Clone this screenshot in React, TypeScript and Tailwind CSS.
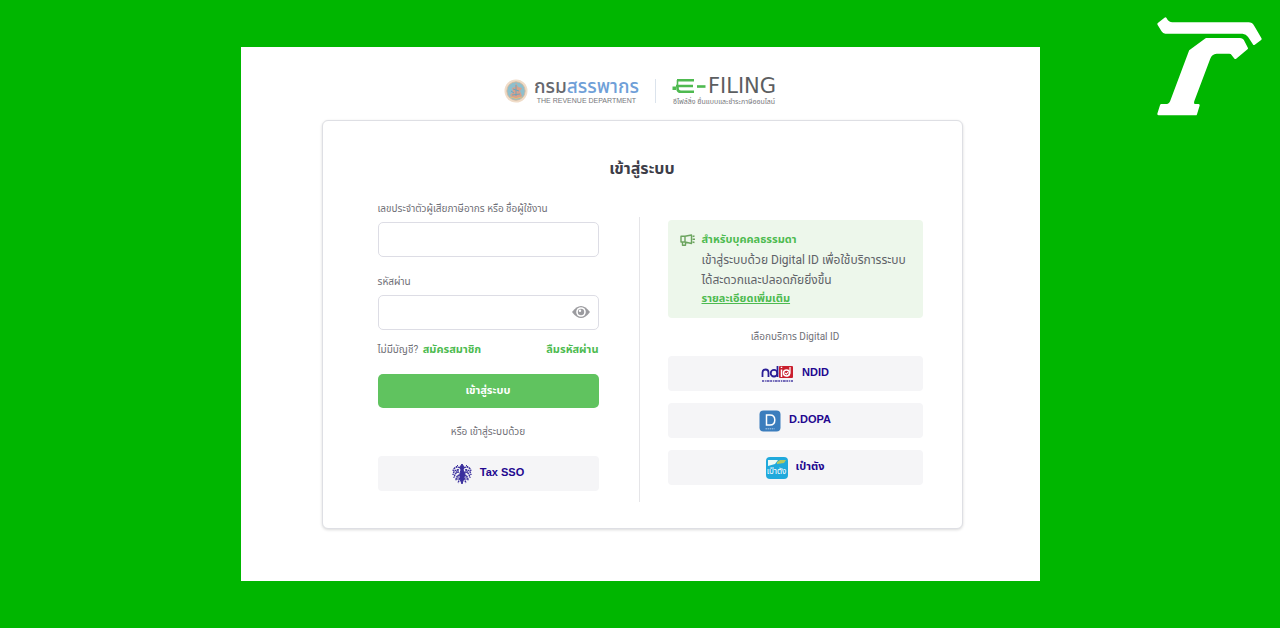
import type { ReactNode } from "react";

function PublisherLogo() {
  return (
    <svg
      viewBox="48 48 321 300"
      className="absolute top-4 right-[17px] w-[107px] h-[100px] text-white"
      fill="currentColor"
      stroke="currentColor"
      strokeWidth="8"
      strokeLinejoin="round"
      aria-hidden="true"
    >
      <path d="M56 72 L76 56 Q84 71 97 71 H326 Q334 71 339 79 L361 117 L342 131 Q334 118 327 108 Q321 98 308 97 H76 Q71 97 68 92 Z" />
      <path d="M199 118 H300 Q305 118 308 122 L320 145 L286 173 L276 160 Q273 157 268 157 H230 Q212 158 207 175 L159 302 Q156 315 164 316 H175 L167 342 H56 L64 316 H82 Q90 315 94 305 L151 153 Z" />
    </svg>
  );
}

function Seal() {
  return (
    <svg viewBox="0 0 24 24" className="size-6 shrink-0" aria-hidden="true">
      <circle cx="12" cy="12" r="11.5" fill="#f0dcc8" />
      <circle cx="12" cy="12" r="9.2" fill="#8ebfcd" stroke="#d9b596" strokeWidth="0.8" />
      <path d="M12 4 L14 8 L18 9 L16 12 L18 17 L14 19 H9 L6 16 L9 13 L8 9 L11 8 Z" fill="#d9a08b" />
      <path d="M12 6 V17 M9 10 L15 12 M8 16 L16 15 M7 12 L10 14" stroke="#6fa5bb" strokeWidth="1" />
      <path d="M6 18 Q12 21 18 18" stroke="#e8bd77" strokeWidth="1" fill="none" />
    </svg>
  );
}

function EFilingMark() {
  return (
    <svg viewBox="0 0 34 16" className="w-[34px] h-4 shrink-0" fill="none" aria-hidden="true">
      <path d="M5 2.2 H22 M4 8 H21 M22 13.8 H9 Q5.5 13.8 5.5 10.5 V8" stroke="#4fba50" strokeWidth="2.6" />
      <path d="M5.5 2 V8" stroke="#4fba50" strokeWidth="1.6" />
      <path d="M0.5 8.5 H4 V12 H0.5 Z" fill="#4fba50" />
      <path d="M25 8.5 H33.5" stroke="#4fba50" strokeWidth="2.6" />
    </svg>
  );
}

function EyeIcon() {
  return (
    <svg viewBox="0 0 20 14" className="w-5 h-3.5" aria-hidden="true">
      <path d="M1 7 Q10 -5 19 7 Q10 19 1 7 Z" fill="#9b9b9f" />
      <circle cx="10" cy="7" r="4.8" fill="white" />
      <circle cx="10" cy="7" r="3.2" fill="#9b9b9f" />
      <circle cx="9" cy="5.8" r="1.2" fill="white" />
    </svg>
  );
}

function MegaphoneIcon() {
  return (
    <svg viewBox="0 0 16 14" className="w-4 h-3.5 mt-[3px] shrink-0" fill="none" stroke="#6ba45e" strokeWidth="1.4" strokeLinejoin="round" aria-hidden="true">
      <path d="M1 3.2 H5 L11.5 2 V10.5 L5 9 H1 Z M5 3.2 V9 M2.5 9 V12.3 H5.5 V9.5" />
      <path d="M12.5 3.5 L14.5 3 M12.5 6.2 H15 M12.5 9 L14.5 9.5" />
    </svg>
  );
}

function GarudaIcon() {
  return (
    <svg viewBox="0 0 20 22" className="w-5 h-[22px]" fill="none" stroke="#3a2f9d" aria-hidden="true">
      <path d="M10 1 L12 4 L11 7 L13 10 L12 15 L10 21 L8 16 L8 10 L9 7 L8 4 Z" fill="#3a2f9d" />
      <path d="M8 5 Q3 2 1 8 M7 7 Q2 6 1 12 M7 9 Q3 9 2 15 M8 12 Q4 12 4 18 M8 15 L6 20" strokeWidth="1.4" strokeDasharray="2 0.6" />
      <path d="M12 5 Q17 2 19 8 M13 7 Q18 6 19 12 M13 9 Q17 9 18 15 M12 12 Q16 12 16 18 M12 15 L14 20" strokeWidth="1.4" strokeDasharray="2 0.6" />
      <path d="M4 4 L6 2 M14 2 L16 4 M6 6 L4 10 M14 6 L16 10 M6 12 L6 17 M14 12 L14 17" />
    </svg>
  );
}

function NdidIcon() {
  return (
    <svg viewBox="0 0 33 18" className="w-[33px] h-[18px]" fill="none" aria-hidden="true">
      <rect x="18" y="1" width="14" height="12" rx="1" fill="#c91f2e" />
      <g stroke="#2b1f96" strokeWidth="1.8">
        <path d="M1.5 12 V7.5 Q1.5 4.5 4.5 4.5 Q7.5 4.5 7.5 7.5 V12" />
        <circle cx="13" cy="8.2" r="3.3" />
        <path d="M16.5 1 V12" />
      </g>
      <g stroke="white" strokeWidth="1.5">
        <path d="M20.5 4.5 V12 M20.5 1.8 V3" />
        <circle cx="25.5" cy="8" r="3" />
        <path d="M29 2 V7 Q29 11 25.5 11 M24 8 L25.5 9 L27 7" strokeWidth="1.2" />
      </g>
      <path d="M1 16 H32" stroke="#4a3fa5" strokeWidth="1.6" strokeDasharray="2 0.8 1 0.7 3 0.6" />
    </svg>
  );
}

function DopaIcon() {
  return (
    <svg viewBox="0 0 22 22" className="size-[22px]" aria-hidden="true">
      <rect x="0.5" y="0.5" width="21" height="21" rx="4" fill="#3b7dbd" />
      <path d="M7.5 5 H11 Q15.8 5 15.8 10 Q15.8 15 11 15 H7.5 Z" fill="none" stroke="white" strokeWidth="1.5" />
      <path d="M6.5 18.8 H15.5" stroke="#a9cbea" strokeDasharray="1.5 0.6" />
    </svg>
  );
}

function PaotangIcon() {
  return (
    <span className="relative flex size-[22px] items-end justify-center overflow-hidden rounded bg-[#20a9dc] text-[8px] leading-[14px] font-normal text-white">
      <svg viewBox="0 0 22 22" className="absolute inset-0" aria-hidden="true">
        <path d="M2 3 H12 L9 7 L2 9 Z" fill="#eef9f5" />
        <path d="M11 5 L14 3 H20 L18 6 L11 7 Z" fill="#b6c861" />
      </svg>
      <span className="relative">เป๋าตัง</span>
    </span>
  );
}

function ServiceButton({ icon, children }: { icon: ReactNode; children: ReactNode }) {
  return (
    <button
      type="button"
      className="flex h-[35px] w-full items-center justify-center gap-2 rounded bg-[#f5f5f7] text-[11px] font-bold text-[#22078f]"
    >
      {icon}
      <span className="pb-0.5">{children}</span>
    </button>
  );
}

export default function App() {
  return (
    <div className="relative min-h-screen bg-[#00b600] py-[47px] font-['Liberation_Sans','Noto_Sans_Thai',sans-serif]">
      <PublisherLogo />
      <main className="mx-auto max-w-[799px] bg-white pt-7 pr-4 pb-[52px] pl-5">
        <header className="flex h-[45px] items-start justify-center pr-1">
          <div className="flex items-center gap-1.5 pt-0.5">
            <Seal />
            <div className="text-center">
              <div className="text-[19px] leading-5 font-medium text-[#66686e]">
                กรม<span className="text-[#6f9fd8]">สรรพากร</span>
              </div>
              <div className="text-[7px] leading-2 text-[#77777c]">THE REVENUE DEPARTMENT</div>
            </div>
          </div>
          <div className="mx-4 mt-1 h-6 border-l border-[#dbe3ec]" />
          <div className="pt-[3px]">
            <div className="flex items-center gap-0.5 font-['DejaVu_Sans',sans-serif] text-[21px] leading-4 text-[#5c5e61]">
              <EFilingMark />
              FILING
            </div>
            <div className="pt-1 text-center text-[7px] leading-2 text-[#77777c]">อีไฟล์ลิ่ง ยื่นแบบและชำระภาษีออนไลน์</div>
          </div>
        </header>

        <section className="mx-auto max-w-[641px] rounded-md border border-[#dedfe4] bg-white pt-9 pb-[26px] shadow-[0_1px_3px_rgba(0,0,0,0.15)]">
          <h1 className="text-center text-base leading-6 font-bold text-[#3d3d48]">เข้าสู่ระบบ</h1>
          <div className="mt-9 grid grid-cols-[221fr_284fr] gap-x-10 pr-[39px] pl-[55px] font-['Roboto','Noto_Sans_Thai',sans-serif]">
            <form className="-mt-4 text-[10px] text-[#707077]">
              <label htmlFor="taxpayer" className="block leading-4">เลขประจำตัวผู้เสียภาษีอากร หรือ ชื่อผู้ใช้งาน</label>
              <input id="taxpayer" className="mt-[5px] block h-[35px] w-full rounded-[5px] border border-[#dddde5] px-3 text-xs" />
              <label htmlFor="password" className="mt-[17px] block leading-4">รหัสผ่าน</label>
              <div className="relative mt-[5px]">
                <input id="password" type="password" className="block h-[35px] w-full rounded-[5px] border border-[#dddde5] px-3 pr-9 text-xs" />
                <button type="button" aria-label="แสดงรหัสผ่าน" className="absolute top-2.5 right-2">
                  <EyeIcon />
                </button>
              </div>
              <div className="mt-3 flex items-center justify-between leading-4">
                <p>
                  ไม่มีบัญชี? <a href="#register" className="ml-0.5 text-[11px] font-bold text-[#4dbb50]">สมัครสมาชิก</a>
                </p>
                <a href="#forgot" className="text-[11px] font-bold text-[#4dbb50]">ลืมรหัสผ่าน</a>
              </div>
              <button type="submit" className="mt-4 h-[34px] w-full rounded-[5px] bg-[#60c35f] text-[11px] font-bold text-white">เข้าสู่ระบบ</button>
              <p className="my-4 text-center leading-4">หรือ เข้าสู่ระบบด้วย</p>
              <div className="font-['Liberation_Sans','Noto_Sans_Thai',sans-serif]">
                <ServiceButton icon={<GarudaIcon />}>Tax SSO</ServiceButton>
              </div>
            </form>

            <div className="border-l border-[#e5e5e8] pt-[3px] pb-[17px] pl-7">
              <div className="flex gap-1.5 rounded bg-[#edf7eb] py-2.5 pr-3 pl-3 text-xs leading-5 text-[#606268]">
                <MegaphoneIcon />
                <div>
                  <h2 className="text-[11px] leading-5 font-bold text-[#4dbb50]">สำหรับบุคคลธรรมดา</h2>
                  <p className="whitespace-nowrap">
                    เข้าสู่ระบบด้วย Digital ID เพื่อใช้บริการระบบ
                    <br />
                    ได้สะดวกและปลอดภัยยิ่งขึ้น
                  </p>
                  <a href="#details" className="block text-[11px] leading-[18px] font-bold text-[#4dbb50] underline">รายละเอียดเพิ่มเติม</a>
                </div>
              </div>
              <p className="my-[11px] text-center text-[10px] leading-4 text-[#707077]">เลือกบริการ Digital ID</p>
              <div className="flex flex-col gap-3 font-['Liberation_Sans','Noto_Sans_Thai',sans-serif]">
                <ServiceButton icon={<NdidIcon />}>NDID</ServiceButton>
                <ServiceButton icon={<DopaIcon />}>D.DOPA</ServiceButton>
                <ServiceButton icon={<PaotangIcon />}>เป๋าตัง</ServiceButton>
              </div>
            </div>
          </div>
        </section>
      </main>
    </div>
  );
}
